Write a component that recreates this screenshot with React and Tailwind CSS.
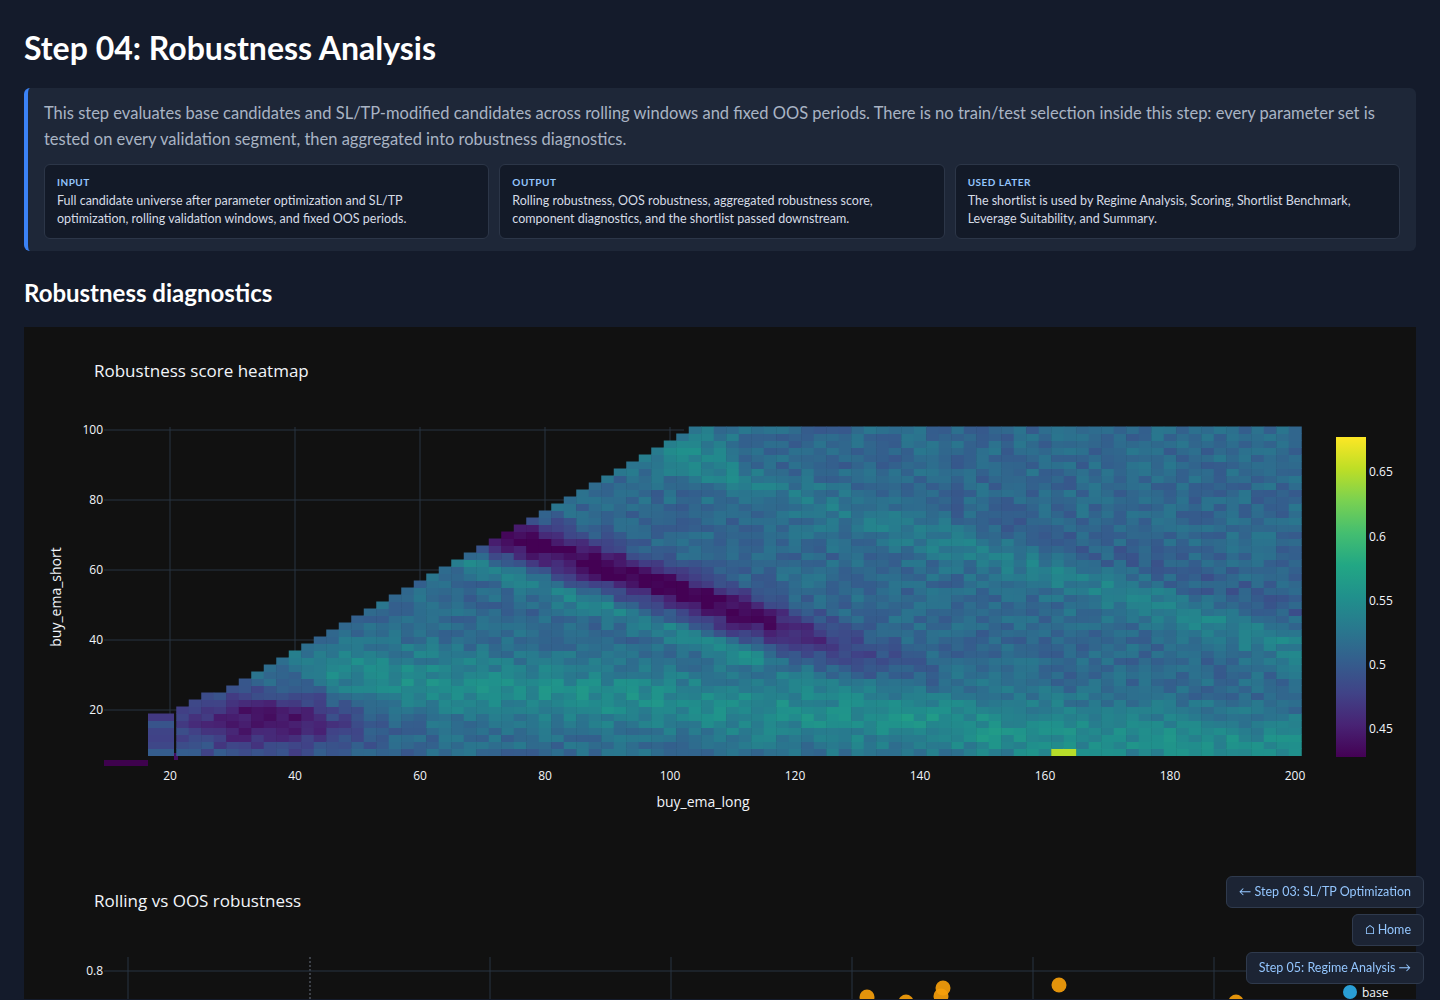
import React from "react";

const VIR = [
  [68, 1, 84], [72, 35, 116], [64, 67, 135], [52, 94, 141], [41, 120, 142],
  [32, 144, 140], [34, 167, 132], [68, 190, 112], [121, 209, 81], [189, 222, 38], [253, 231, 37],
];
function viridis(t) {
  t = Math.max(0, Math.min(1, t));
  const p = t * (VIR.length - 1);
  const i = Math.min(VIR.length - 2, Math.floor(p));
  const f = p - i;
  const a = VIR[i], b = VIR[i + 1];
  return `rgb(${Math.round(a[0] + (b[0] - a[0]) * f)},${Math.round(a[1] + (b[1] - a[1]) * f)},${Math.round(a[2] + (b[2] - a[2]) * f)})`;
}
function hash(x, y) {
  const s = Math.sin(x * 12.9898 + y * 78.233) * 43758.5453;
  return s - Math.floor(s);
}
const VMIN = 0.428, VMAX = 0.677;
function score(x, y) {
  let v = 0.512;
  const d1 = y - (68 - (x - 78) * 0.6);
  const band = Math.exp(-(d1 * d1) / 40) * Math.max(0, Math.min(1, (145 - x) / 35)) * (x > 66 ? 1 : 0);
  v -= 0.085 * band;
  const d2 = y - (56 - (x - 78) * 0.6);
  v += 0.03 * Math.exp(-(d2 * d2) / 10) * (x < 115 ? 1 : 0.3);
  const dl = Math.hypot((x - 35) / 15, (y - 17) / 9);
  v -= 0.075 * Math.exp(-dl * dl);
  v += 0.035 * Math.exp(-((y - (28 - (x - 60) * 0.14)) ** 2) / 90) * (x > 45 ? 1 : 0.4);
  const d3 = y - (95 - (x - 100) * 0.55);
  v += 0.03 * Math.exp(-(d3 * d3) / 60);
  const d4 = y - (82 - (x - 130) * 0.5);
  v -= 0.02 * Math.exp(-(d4 * d4) / 40) * (x > 110 ? 1 : 0);
  v += (hash(x, y) - 0.5) * 0.03;
  return v;
}

function Heatmap() {
  const cells = [];
  const x0 = 170, sx = 6.25, y0 = 711, sy = 3.5;
  for (let x = 22; x <= 200; x += 2) {
    const top = Math.min(100, x < 40 ? Math.floor(x * 0.85 + 2) : x - 4);
    for (let y = 8; y <= top; y += 2) {
      let v = score(x, y);
      if (x >= 162 && x <= 164 && y === 8) v = 0.65;
      const px = x0 + (x - 1 - 20) * sx;
      const py = y0 - (y + 1 - 20) * sy;
      cells.push(<rect key={x + "-" + y} x={px - 24} y={py - 328} width={sx * 2 + 0.5} height={sy * 2 + 0.5} fill={viridis((v - VMIN) / (VMAX - VMIN))} />);
    }
  }
  for (let y = 8; y <= 18; y += 2) {
    const v = score(18, y) - 0.01;
    cells.push(<rect key={"l" + y} x={148 - 24} y={y0 - (y + 1 - 20) * sy - 328} width={26} height={7.5} fill={viridis((v - VMIN) / (VMAX - VMIN))} />);
  }
  const xt = [20, 40, 60, 80, 100, 120, 140, 160, 180, 200];
  const yt = [20, 40, 60, 80, 100];
  const stops = [];
  for (let i = 0; i <= 10; i++) stops.push(<stop key={i} offset={`${i * 10}%`} stopColor={viridis(1 - i / 10)} />);
  return (
    <svg width="1392" height="510" className="block" style={{ fontFamily: '"Open Sans", sans-serif' }}>
      <defs>
        <linearGradient id="cb" x1="0" y1="0" x2="0" y2="1">{stops}</linearGradient>
      </defs>
      <text x="70" y="50" fill="#f2f5fa" fontSize="17">Robustness score heatmap</text>
      {xt.slice(0, 5).map((t) => (
        <line key={t} x1={170 - 24 + (t - 20) * 6.25} x2={170 - 24 + (t - 20) * 6.25} y1={100} y2={428} stroke="#283442" />
      ))}
      {yt.map((t) => (
        <line key={t} x1={80} x2={660} y1={711 - 328 - (t - 20) * 3.5} y2={711 - 328 - (t - 20) * 3.5} stroke="#283442" />
      ))}
      <rect x={80} y={433} width={44} height={6} fill="#440154" opacity="0.9" />
      <rect x={150} y={426} width={4} height={7} fill="#440f5f" />
      {cells}
      {xt.map((t) => (
        <text key={t} x={170 - 24 + (t - 20) * 6.25} y={453} fill="#f2f5fa" fontSize="12" textAnchor="middle">{t}</text>
      ))}
      {yt.map((t) => (
        <text key={t} x={79} y={711 - 328 - (t - 20) * 3.5 + 4} fill="#f2f5fa" fontSize="12" textAnchor="end">{t}</text>
      ))}
      <text x={679} y={480} fill="#f2f5fa" fontSize="14" textAnchor="middle">buy_ema_long</text>
      <text transform="translate(37,270) rotate(-90)" fill="#f2f5fa" fontSize="14" textAnchor="middle">buy_ema_short</text>
      <rect x={1312} y={110} width={30} height={320} fill="url(#cb)" />
      {[[0.65, 473], [0.6, 538], [0.55, 602], [0.5, 666], [0.45, 730]].map(([v, y]) => (
        <text key={v} x={1345} y={y - 328 + 4} fill="#f2f5fa" fontSize="12">{v}</text>
      ))}
    </svg>
  );
}

function Scatter() {
  const dots = [[867, 988], [893, 998], [906, 993], [943, 979], [941, 987], [1059, 976], [1236, 993]];
  return (
    <svg width="1392" height="162" className="block" style={{ fontFamily: '"Open Sans", sans-serif' }}>
      <text x="70" y="70" fill="#f2f5fa" fontSize="17">Rolling vs OOS robustness</text>
      {[128, 490, 671, 852, 1033, 1214].map((x) => (
        <line key={x} x1={x - 24} x2={x - 24} y1={120} y2={162} stroke="#283442" />
      ))}
      <line x1={286} x2={286} y1={120} y2={162} stroke="#6b7280" strokeDasharray="2 2" />
      <line x1={80} x2={1230} y1={134} y2={134} stroke="#283442" />
      <text x={79} y={138} fill="#f2f5fa" fontSize="12" textAnchor="end">0.8</text>
      {dots.map(([x, y], i) => (
        <circle key={i} cx={x - 24} cy={y - 828} r="7.5" fill="#f59e0b" opacity="0.92" />
      ))}
      <circle cx={1326} cy={155} r="7" fill="#2a9fd6" />
      <text x={1338} y={160} fill="#f2f5fa" fontSize="12">base</text>
    </svg>
  );
}

function InfoCard({ label, children }) {
  return (
    <div className="flex-1 rounded-md border border-[#2c3648] bg-[#131a28] px-3 py-2.5">
      <div className="text-[10px] font-bold tracking-wider text-[#93c5fd]">{label}</div>
      <div className="mt-0.5 text-[12.5px] leading-[18px] text-[#d6dce6]">{children}</div>
    </div>
  );
}

export default function App() {
  return (
    <div className="h-screen overflow-hidden bg-[#141b2b] px-6 pt-6 text-white" style={{ fontFamily: 'Lato, "Noto Sans", sans-serif' }}>
      <h1 className="text-[32px] font-bold leading-[48px] text-white">Step 04: Robustness Analysis</h1>
      <div className="mt-4 rounded-md border-l-4 border-[#3b82f6] bg-[#1e2738] px-4 pb-3 pt-3">
        <p className="text-[16.5px] leading-[26px] text-[#a9b4c4]">
          This step evaluates base candidates and SL/TP-modified candidates across rolling windows and fixed OOS periods. There is no train/test selection inside this step: every parameter set is tested on every validation segment, then aggregated into robustness diagnostics.
        </p>
        <div className="mt-3 flex gap-2.5">
          <InfoCard label="INPUT">Full candidate universe after parameter optimization and SL/TP optimization, rolling validation windows, and fixed OOS periods.</InfoCard>
          <InfoCard label="OUTPUT">Rolling robustness, OOS robustness, aggregated robustness score, component diagnostics, and the shortlist passed downstream.</InfoCard>
          <InfoCard label="USED LATER">The shortlist is used by Regime Analysis, Scoring, Shortlist Benchmark, Leverage Suitability, and Summary.</InfoCard>
        </div>
      </div>
      <h2 className="mt-6 text-[24px] font-bold leading-[36px]">Robustness diagnostics</h2>
      <div className="mt-4 bg-[#111111]">
        <Heatmap />
        <Scatter />
      </div>
      <div className="fixed right-4 top-[876px] flex flex-col items-end gap-[6px] text-[12.5px] text-[#93c5fd]">
        <button className="h-8 rounded-md border border-[#2f3a4d] bg-[#1c2434] px-3">← Step 03: SL/TP Optimization</button>
        <button className="h-8 rounded-md border border-[#2f3a4d] bg-[#1c2434] px-3">⌂ Home</button>
        <button className="h-8 rounded-md border border-[#2f3a4d] bg-[#1c2434] px-3">Step 05: Regime Analysis →</button>
      </div>
    </div>
  );
}
